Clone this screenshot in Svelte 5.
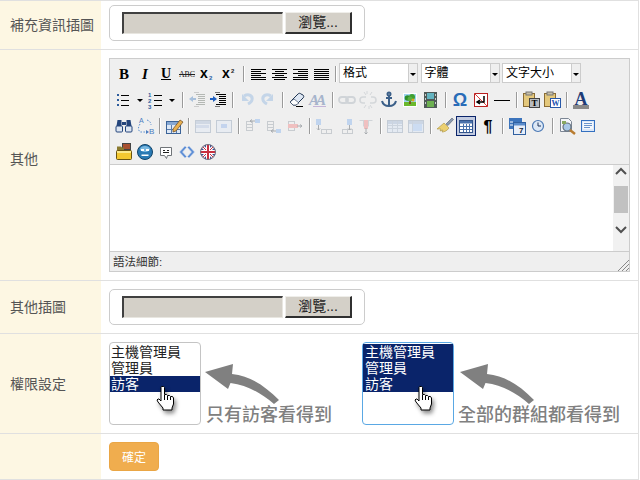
<script>
	const sans = 'font-family="Liberation Sans"';
	const serif = 'font-family="Liberation Serif"';

	const hline = (x1, x2, y, c = '#000') => `<path d="M${x1} ${y}.5H${x2}" stroke="${c}" shape-rendering="crispEdges"/>`;
	const lines = (rows, c) => rows.map(([x1, x2, y]) => hline(x1, x2, y, c)).join('');

	const grid = (x, y, w, h, stroke, fill, head) => {
		let s = `<rect x="${x}.5" y="${y}.5" width="${w}" height="${h}" fill="${fill}" stroke="${stroke}" shape-rendering="crispEdges"/>`;
		if (head) s += `<rect x="${x + 1}" y="${y + 1}" width="${w - 1}" height="3" fill="${head}"/>`;
		return s;
	};
	const rowsOf = (c) => `<g fill="none" stroke="${c}" shape-rendering="crispEdges"><path d="M3.5 5.5h6v9h-6zM3.5 8.5h6M3.5 11.5h6"/></g>`;
	const colsOf = (c) => `<g fill="none" stroke="${c}" shape-rendering="crispEdges"><path d="M7.5 13.5h10v4h-10zM12.5 13.5v4"/></g>`;

	const icons = {
		bold: `<text x="10" y="15" ${serif} font-weight="bold" font-size="15" text-anchor="middle">B</text>`,
		italic: `<text x="10" y="15" ${serif} font-weight="bold" font-style="italic" font-size="15" text-anchor="middle">I</text>`,
		underline: `<text x="10" y="14" ${serif} font-weight="bold" font-size="14" text-anchor="middle">U</text>${hline(5, 15, 15)}`,
		strike: `<text x="10" y="13" ${serif} font-size="9" fill="#111" text-anchor="middle" textLength="16" lengthAdjust="spacingAndGlyphs">ABC</text>${hline(2, 18, 10, '#222')}`,
		sub: `<text x="2" y="14" ${sans} font-weight="bold" font-size="14">x</text><text x="11" y="16" ${sans} font-weight="bold" font-size="6" fill="#2a5fa8">2</text>`,
		sup: `<text x="3" y="14" ${sans} font-weight="bold" font-size="14">x</text><text x="12" y="9" ${sans} font-weight="bold" font-size="6" fill="#222">2</text>`,
		left: lines([[3, 18, 5], [3, 13, 7], [3, 18, 9], [3, 13, 11], [3, 18, 13], [3, 18, 15]]),
		center: lines([[3, 18, 5], [6, 15, 7], [3, 18, 9], [6, 15, 11], [3, 18, 13], [5, 16, 15]]),
		right: lines([[3, 18, 5], [8, 18, 7], [3, 18, 9], [8, 18, 11], [3, 18, 13], [3, 18, 15]]),
		full: lines([[3, 18, 5], [3, 18, 7], [3, 18, 9], [3, 18, 11], [3, 18, 13], [3, 18, 15]]),
		bullist: `<g fill="#2d5c9e"><rect x="3" y="4" width="2" height="2"/><rect x="3" y="9" width="2" height="2"/><rect x="3" y="14" width="2" height="2"/></g>` + lines([[7, 15, 5], [7, 15, 10], [7, 15, 15]]),
		numlist: `<g ${sans} font-size="6" font-weight="bold" fill="#2d5c9e"><text x="2" y="7">1</text><text x="2" y="13">2</text><text x="2" y="19">3</text></g>` + lines([[8, 16, 5], [8, 16, 10], [8, 16, 15]]),
		outdent: lines([[9, 18, 4], [11, 18, 6], [11, 18, 8], [11, 18, 10], [11, 18, 12], [9, 18, 14]], '#b4b8b4') + lines([[7, 12, 2], [7, 12, 16]], '#ccc') + `<path d="M2 9l4-3v6z" fill="#a8c0dc"/><path d="M6 8h3v2h-3z" fill="#a8c0dc"/>`,
		indent: lines([[8, 18, 4], [11, 18, 6], [11, 18, 8], [11, 18, 10], [11, 18, 12], [8, 18, 14]]) + lines([[7, 12, 2], [7, 12, 16]], '#777') + `<path d="M9 9l-4-3v6z" fill="#2060c0"/><path d="M2 8h4v2h-4z" fill="#2060c0"/>`,
		undo: `<path d="M5 4v7h7z" fill="#c4d5e8"/><path d="M7 6c5-3 9 0 8 4-.5 2-2 3-4 4" fill="none" stroke="#c4d5e8" stroke-width="3"/>`,
		redo: `<path d="M15 4v7H8z" fill="#c4d5e8"/><path d="M13 6c-5-3-9 0-8 4 .5 2 2 3 4 4" fill="none" stroke="#c4d5e8" stroke-width="3"/>`,
		eraser: `<path d="M3 12l8-8c1-1 2-1 3 0l2 1c1 1 1 2 0 3l-7 7H6z" fill="#dfe8f4" stroke="#1e3350"/><path d="M3 12l4-3 5 4-3 2H6z" fill="#fff" stroke="#1e3350" stroke-width=".6"/>${hline(9, 16, 16)}`,
		aa: `<text x="1" y="15" ${serif} font-style="italic" font-weight="bold" font-size="15" letter-spacing="-3" fill="#a6b4cc">AA</text>${hline(5, 18, 16, '#c4b4d8')}`,
		link: `<g fill="none" stroke="#d0d4d8" stroke-width="1.8"><rect x="2" y="7" width="9" height="6" rx="3"/><rect x="9" y="7" width="9" height="6" rx="3"/></g>`,
		unlink: `<g fill="none" stroke="#d4d7da" stroke-width="1.6"><path d="M8 7H5a3 3 0 000 6h2M12 13h3a3 3 0 000-6h-2"/><path d="M6 2l2 3M14 2l-2 3M6 18l2-3M14 18l-2-3M9 1v3M11 16v3" stroke-width="1"/></g>`,
		anchor: `<g fill="none" stroke="#3b5f88" stroke-width="2"><circle cx="10" cy="4" r="1.5"/><path d="M10 6v10M7 8h6M3 11c1 4 4 5 7 5s6-1 7-5"/></g>`,
		image: `<rect x="3" y="3" width="14" height="14" fill="#fff"/><rect x="4" y="4" width="12" height="9" fill="#9fd4f0"/><rect x="4" y="12" width="12" height="4" fill="#6ab82c"/><rect x="9" y="9" width="2" height="5" fill="#7a5020"/><circle cx="7.5" cy="8" r="2.8" fill="#2f8f2a"/><circle cx="12" cy="7" r="3" fill="#3fa030"/><circle cx="10" cy="9" r="2.5" fill="#5ab040"/><circle cx="13" cy="10" r="1.5" fill="#e0a020"/>`,
		media: `<rect x="3" y="2" width="13" height="16" fill="#4f5a58"/><rect x="6" y="3" width="7" height="6" fill="#64b4c0"/><rect x="6" y="11" width="7" height="6" fill="#6cb050"/><g fill="#c8d0cc"><rect x="4" y="4" width="1" height="2"/><rect x="4" y="8" width="1" height="2"/><rect x="4" y="12" width="1" height="2"/><rect x="14" y="4" width="1" height="2"/><rect x="14" y="8" width="1" height="2"/><rect x="14" y="12" width="1" height="2"/></g>`,
		omega: `<text x="10" y="16" ${sans} font-weight="bold" font-size="18" fill="#2a6cb8" text-anchor="middle">Ω</text>`,
		nbsp: `<rect x="3.5" y="3.5" width="13" height="13" fill="#fff" stroke="#b82020"/><path d="M3 3l14 14" stroke="#d84040"/><path d="M13 6v6H7M9 10l-3 2 3 2" fill="none" stroke="#000" stroke-width="1.5"/>`,
		hr: hline(2, 18, 10),
		pastetext: `<rect x="2.5" y="3.5" width="11" height="13" fill="#e4c87c" stroke="#8a6c34"/><rect x="5" y="2" width="6" height="3" fill="#c8c0a8" stroke="#777"/><rect x="8.5" y="8.5" width="10" height="9" fill="#b8bcc0" stroke="#444"/><text x="13.5" y="16" ${serif} font-weight="bold" font-size="9" text-anchor="middle">T</text>`,
		pasteword: `<rect x="2.5" y="3.5" width="11" height="13" fill="#e4c87c" stroke="#8a6c34"/><rect x="5" y="2" width="6" height="3" fill="#c8c0a8" stroke="#777"/><rect x="8.5" y="8.5" width="10" height="9" fill="#fff" stroke="#2858a8"/><text x="13.5" y="16" ${serif} font-weight="bold" font-size="8" fill="#2050b0" text-anchor="middle">W</text>`,
		color: `<text x="10" y="15" ${serif} font-weight="bold" font-size="18" fill="#1e3c78" text-anchor="middle">A</text><rect x="2" y="15" width="16" height="4" fill="#888"/>`,
		find: `<g fill="#24457c"><path d="M3.5 4h4v6h-5zM12.5 4h4l1 6h-5z"/><rect x="8" y="6" width="4" height="3"/></g><rect x="2" y="10" width="6.5" height="6" rx="1" fill="#dde6f2" stroke="#24457c"/><rect x="11.5" y="10" width="6.5" height="6" rx="1" fill="#dde6f2" stroke="#24457c"/>`,
		replace: `<g fill="none" stroke="#5a8ed0" stroke-dasharray="1.5 1.5"><path d="M5 8c-2 3-2 6 0 8h6"/><path d="M12 4c3 1 4 3 4 5"/></g><text x="4" y="7" ${sans} font-size="7" fill="#4a7cc0">A</text><text x="14" y="18" ${sans} font-size="8" fill="#4a7cc0">B</text><path d="M11 14l3 2-3 2z" fill="#4a7cc0"/>`,
		tableprops: `<rect x="2.5" y="5.5" width="14" height="12" fill="#dde8f6" stroke="#3c6498"/><rect x="3" y="6" width="13" height="3" fill="#86a8d4"/><path d="M7.5 9v8M12.5 9v8M3 13.5h13" stroke="#5a7cac"/><path d="M9 13l7-9 3 2-7 9-3 1z" fill="#e8b050" stroke="#6a4820" stroke-width=".7"/>`,
		cellp: grid(2, 4, 15, 12, '#c4ccd6', '#e8ecf2', '#d0d8e4') + `<rect x="3" y="9" width="13" height="3" fill="#d4dcea"/>`,
		rowp: grid(2, 4, 15, 12, '#c4ccd6', '#e8ecf2') + `<rect x="7" y="8" width="6" height="4" fill="#c4d4ee"/>`,
		rowb: rowsOf('#c8ccd0') + `<rect x="12" y="3" width="5" height="4" fill="#c0d4ee"/><path d="M7 5h5M9 3.5L7 5l2 1.5" fill="none" stroke="#a8acb0"/>`,
		rowa: rowsOf('#c8ccd0') + `<rect x="12" y="13" width="5" height="4" fill="#c0d4ee"/><path d="M7 15h5M9 13.5L7 15l2 1.5" fill="none" stroke="#a8acb0"/>`,
		rowd: rowsOf('#c8ccd0') + `<rect x="3" y="8" width="10" height="4" fill="#f0c0c0"/><path d="M12 10h5M15 8.5l2 1.5-2 1.5" fill="none" stroke="#a8acb0"/>`,
		cola: colsOf('#c8ccd0') + `<rect x="2" y="3" width="5" height="6" fill="#c0d4ee"/><path d="M4.5 9v5M3 12.5L4.5 14 6 12.5" fill="none" stroke="#a8acb0"/>`,
		colb: colsOf('#c8ccd0') + `<rect x="12" y="3" width="5" height="6" fill="#c0d4ee"/><path d="M14.5 9v5M13 12.5l1.5 1.5 1.5-1.5" fill="none" stroke="#a8acb0"/>`,
		cold: `<path d="M3.5 4.5h13M7.5 4.5v6M12.5 4.5v6" stroke="#d0d4d8" fill="none"/><rect x="8" y="4" width="4" height="9" fill="#f0c0c0"/><path d="M10 12v6M8.5 16.5L10 18l1.5-1.5" fill="none" stroke="#a8acb0"/>`,
		split: grid(2, 4, 15, 12, '#c4ccd6', '#e4eaf2', '#ccd6e4') + `<path d="M7.5 5v11M12.5 5v11M3 9.5h14M3 12.5h14" stroke="#ccd4de"/>`,
		merge: grid(2, 4, 15, 12, '#c4ccd6', '#e4eaf2', '#ccd6e4') + `<rect x="7" y="8" width="9" height="7" fill="#ccdcf2"/><path d="M6.5 5v11" stroke="#ccd4de"/>`,
		brush: `<path d="M2 13l7-6 5 5c-2 3-5 4-7 4l1-2-3 1 1-2z" fill="#ecd070" stroke="#a89040" stroke-width=".6"/><path d="M11 8l6-6 1.5 1.5-5.500 6z" fill="#8a9ab0" stroke="#55606e" stroke-width=".6"/>`,
		visual: `<rect x="3.5" y="4.5" width="13" height="12" fill="#fff" stroke="#34568c"/><rect x="4" y="5" width="12" height="2.5" fill="#4a72ac"/><path d="M7.5 8v8M10.5 8v8M13.5 8v8M4 10.5h12M4 13.5h12" stroke="#4a72ac" shape-rendering="crispEdges"/>`,
		pilcrow: `<text x="10" y="16" ${sans} font-weight="bold" font-size="16" text-anchor="middle">¶</text>`,
		cal: `<rect x="2" y="2" width="13" height="11" fill="#3c74bc"/><rect x="6.5" y="6.5" width="12" height="12" fill="#e8eef8" stroke="#3060a0"/><rect x="7" y="7" width="11" height="2.5" fill="#5a8ccc"/><text x="12" y="17" ${sans} font-weight="bold" font-size="8" fill="#123">7</text><path d="M3 6h3M3 9h3" stroke="#fff"/>`,
		clock: `<circle cx="10" cy="10" r="5.5" fill="#dce8f6" stroke="#4a78b4" stroke-width="1.2"/><path d="M10 6.5V10h3" fill="none" stroke="#1e3358"/>`,
		preview: `<path d="M3.5 2.5h8l3 3v10h-11z" fill="#f4f6fa" stroke="#7c8694"/><circle cx="10" cy="11" r="4" fill="#a8c8e8" stroke="#64707c" stroke-width="1.2"/><path d="M13 14l5 4" stroke="#b87c30" stroke-width="2.5"/><rect x="5" y="5" width="4" height="3" fill="#88a860"/>`,
		fullscreen: `<rect x="3.5" y="4.5" width="13" height="11" fill="#dce8f8" stroke="#3470c0"/><rect x="5" y="6" width="10" height="7" fill="#f4f8fd"/><path d="M6 7.5h8M6 9.500h8M6 11.5h6" stroke="#6a94cc"/>`,
		folder: `<rect x="8" y="1" width="9" height="9" fill="#444"/><rect x="9" y="2" width="7" height="5" fill="#a85030"/><path d="M3 4.5h4l1 1h2V10H3z" fill="#8a7a30"/><rect x="2.5" y="8.5" width="15" height="9" rx="1" fill="#f4c830" stroke="#6a5410"/><rect x="3" y="9" width="14" height="2" fill="#fbe88a"/>`,
		smile: `<circle cx="10" cy="10" r="7.5" fill="#2a7ab4" stroke="#134468"/><ellipse cx="10" cy="7" rx="5" ry="3" fill="#7ab8e0"/><rect x="6" y="7" width="3" height="2" fill="#fff"/><rect x="11" y="7" width="3" height="2" fill="#fff"/><path d="M6.5 12.5h7v1.5h-7z" fill="#fff"/>`,
		comment: `<path d="M4.5 5.5h11v8h-4l-1 3-2-3h-4z" fill="#fff" stroke="#707478"/><path d="M7 8.5h2M11 8.5h2M7 10.5h6" stroke="#222"/>`,
		code: `<path d="M8 4L2.500 10 8 16l1.500-1.500L5.500 10l4-4.500zM12 4l5.500 6-5.500 6-1.500-1.500 4-4.500-4-4.500z" fill="#5a8cd4" stroke="#c4d4ec" stroke-width=".6"/>`,
		flag: `<defs><clipPath id="uk"><circle cx="10" cy="10" r="7.5"/></clipPath></defs><g clip-path="url(#uk)"><rect x="2" y="2" width="16" height="16" fill="#3c4c8e"/><path d="M2 2l16 16M18 2L2 18" stroke="#fff" stroke-width="3"/><path d="M2 2l16 16M18 2L2 18" stroke="#c83040" stroke-width="1"/><path d="M10 2v16M2 10h16" stroke="#fff" stroke-width="4"/><path d="M10 2v16M2 10h16" stroke="#c83040" stroke-width="2"/></g><circle cx="10" cy="10" r="7.5" fill="none" stroke="#707080"/>`
	};

	const toolbar = [
		['bold', 'italic', 'underline', 'strike', 'sub', 'sup', '|', 'left', 'center', 'right', 'full', '|', '格式', '字體', '文字大小'],
		['bullist', 'v', 'numlist', 'v', '|', 'outdent', 'indent', '|', 'undo', 'redo', '|', 'eraser', 'aa', '|', 'link', 'unlink', 'anchor', 'image', 'media', '|', 'omega', 'nbsp', 'hr', '|', 'pastetext', 'pasteword', '|', 'color'],
		['find', 'replace', '|', 'tableprops', '|', 'cellp', 'rowp', '|', 'rowb', 'rowa', 'rowd', '|', 'cola', 'colb', 'cold', '|', 'split', 'merge', '|', 'brush', 'visual', 'pilcrow', '|', 'cal', 'clock', '|', 'preview', 'fullscreen'],
		['folder', 'smile', 'comment', 'code', 'flag']
	];

	const roles = ['主機管理員', '管理員', '訪客'];
	const perms = [
		{ selected: ['訪客'], note: '只有訪客看得到', focus: false },
		{ selected: roles, note: '全部的群組都看得到', focus: true }
	];
</script>

{#snippet filebox()}
	<div class="filebox">
		<div class="file-input"></div>
		<div class="file-btn">瀏覽...</div>
	</div>
{/snippet}

<div class="form">
	<div class="row first">
		<div class="label">補充資訊插圖</div>
		<div class="cell">{@render filebox()}</div>
	</div>

	<div class="row">
		<div class="label raised">其他</div>
		<div class="cell">
			<div class="editor">
				<div class="toolbar">
					{#each toolbar as items}
						<div class="tb-row">
							{#each items as item}
								{#if item === '|'}
									<span class="sep"></span>
								{:else if item === 'v'}
									<span class="drop"><i></i></span>
								{:else if icons[item]}
									<span class="tb-btn" class:active={item === 'visual'}>
										<svg width="20" height="20" viewBox="0 0 20 20">{@html icons[item]}</svg>
									</span>
								{:else}
									<span class="tb-select">
										<span class="tb-value">{item}</span>
										<span class="tb-arrow"><i></i></span>
									</span>
								{/if}
							{/each}
						</div>
					{/each}
				</div>
				<div class="area">
					<div class="scrollbar">
						<svg width="16" height="14" viewBox="0 0 16 14"><path d="M3 9l5-5 5 5" fill="none" stroke="#505050" stroke-width="2"/></svg>
						<div class="thumb"></div>
						<svg width="16" height="14" viewBox="0 0 16 14"><path d="M3 5l5 5 5-5" fill="none" stroke="#505050" stroke-width="2"/></svg>
					</div>
				</div>
				<div class="status">
					<span>語法細節:</span>
					<svg class="grip" width="11" height="11" viewBox="0 0 11 11"><path d="M0 11L11 0M4 11l7-7M8 11l3-3" stroke="#888"/></svg>
				</div>
			</div>
		</div>
	</div>

	<div class="row">
		<div class="label">其他插圖</div>
		<div class="cell">{@render filebox()}</div>
	</div>

	<div class="row">
		<div class="label">權限設定</div>
		<div class="cell perms">
			{#each perms as perm, i}
				<div class="perm" class:second={i === 1}>
					<div class="listbox" class:focus={perm.focus}>
						{#each roles as role}
							<div class="option" class:on={perm.selected.includes(role)}>{role}</div>
						{/each}
						<svg class="hand" width="20" height="25" viewBox="0 0 20 25">
							<path d="M5.5.5h2l1 1v7h2l1 1h2l1 1h2l1 1.5v6l-1.5 4v2h-9v-2l-5-6-1-2 1-1h1l2 2V1.5z" fill="#fff" stroke="#000" stroke-linejoin="round"/>
							<path d="M8.5 9v5M11.5 10v4M14.5 11v3" stroke="#000" fill="none"/>
						</svg>
					</div>
					<div class="note">
						<svg width="76" height="41" viewBox="0 0 76 41"><path d="M0 8L28 0l-1 10c19 2 33 12 47 26l-5 4C56 29 42 21 25.5 19L23 25z" fill="#808080"/></svg>
						<div class="note-text">{perm.note}</div>
					</div>
				</div>
			{/each}
		</div>
	</div>

	<div class="row">
		<div class="label"></div>
		<div class="cell"><button class="submit">確定</button></div>
	</div>
</div>

<style>
	:global(body) {
		background: #fff;
	}
	.form {
		width: 638px;
		border-top: 1px solid #e0e0e0;
		border-right: 1px solid #e0e0e0;
		font-family: "Liberation Sans", "Noto Sans CJK TC", sans-serif;
	}
	.row {
		display: flex;
		border-bottom: 1px solid #e0e0e0;
	}
	.label {
		flex: 0 0 91px;
		display: flex;
		align-items: center;
		padding-left: 10px;
		background: #fdf7e3;
		color: #555;
		font-size: 14px;
		line-height: 20px;
	}
	.raised {
		padding-bottom: 12px;
	}
	.cell {
		flex: 1;
		min-width: 0;
		padding: 8px;
	}
	.first .cell {
		padding-top: 4px;
	}

	.filebox {
		display: flex;
		gap: 2px;
		width: 230px;
		padding: 6px 12px;
		border: 1px solid #ccc;
		border-radius: 5px;
	}
	.file-input {
		flex: 0 0 161px;
		box-sizing: border-box;
		height: 22px;
		background: #d4d0c8;
		border-top: 2px solid #404040;
		border-left: 2px solid #404040;
		border-right: 1px solid #e8e6e0;
		border-bottom: 1px solid #e8e6e0;
	}
	.file-btn {
		flex: 0 0 67px;
		box-sizing: border-box;
		height: 22px;
		background: #d4d0c8;
		border-top: 1px solid #efeeea;
		border-left: 1px solid #efeeea;
		border-right: 2px solid #303030;
		border-bottom: 2px solid #303030;
		color: #222;
		font-size: 14px;
		line-height: 19px;
		text-align: center;
	}

	.editor {
		border: 1px solid #ccc;
		background: #efefef;
	}
	.toolbar {
		height: 103px;
		padding: 2px 0 0 3px;
	}
	.tb-row {
		display: flex;
		align-items: center;
		height: 26px;
	}
	.tb-btn {
		flex: 0 0 21px;
		height: 20px;
		display: flex;
		justify-content: center;
	}
	.tb-btn svg {
		display: block;
	}
	.tb-btn.active {
		flex-basis: 19px;
		margin: 0 1px;
		box-sizing: border-box;
		border: 1px solid #0a246a;
		background: #c2cbe0;
	}
	.tb-btn.active svg {
		margin: -1px;
		flex: none;
	}
	.sep {
		flex: 0 0 8px;
		height: 16px;
	}
	.sep::before {
		content: "";
		display: block;
		width: 1px;
		height: 16px;
		margin-left: 4px;
		background: #9a9a9a;
		box-shadow: 1px 0 0 #fff;
	}
	.drop {
		flex: 0 0 11.5px;
		display: flex;
		justify-content: center;
	}
	.drop i,
	.tb-arrow i {
		display: block;
		width: 0;
		height: 0;
		border-left: 3px solid transparent;
		border-right: 3px solid transparent;
		border-top: 3px solid #000;
	}
	.tb-select {
		flex: 0 0 79px;
		display: flex;
		height: 20px;
		margin-right: 2.5px;
		margin-top: -2px;
		font-size: 12px;
		color: #000;
	}
	.tb-value {
		box-sizing: border-box;
		flex: 0 0 70px;
		padding: 0 3px;
		line-height: 18px;
		background: #fff;
		border: 1px solid #ccc;
	}
	.tb-arrow {
		flex: 0 0 9px;
		box-sizing: border-box;
		display: flex;
		align-items: center;
		justify-content: center;
		border: 1px solid #ccc;
		border-left: 0;
		padding-top: 2px;
	}

	.area {
		display: flex;
		justify-content: flex-end;
		height: 86px;
		background: #fff;
		border-top: 1px solid #ccc;
		border-bottom: 1px solid #ccc;
	}
	.scrollbar {
		width: 16px;
		background: #f1f1f1;
	}
	.scrollbar svg {
		display: block;
	}
	.thumb {
		width: 14px;
		height: 27px;
		margin: 7px 1px 9px;
		background: #c1c1c1;
	}
	.status {
		position: relative;
		height: 19px;
		padding-left: 3px;
		font-size: 11.5px;
		line-height: 21px;
		color: #333;
	}
	.grip {
		position: absolute;
		right: 0;
		bottom: 0;
	}

	.perms {
		display: flex;
	}
	.perm {
		display: flex;
		flex: 0 0 253px;
	}
	.listbox {
		position: relative;
		box-sizing: border-box;
		flex: 0 0 92px;
		height: 83px;
		padding: 1px 0;
		border: 1px solid #c4c4c4;
		border-radius: 4px;
		font-size: 14px;
		line-height: 16px;
		color: #222;
	}
	.listbox.focus {
		border-color: #5aa8e4;
	}
	.option {
		height: 16px;
		padding-left: 1px;
	}
	.second .option {
		padding-left: 2px;
	}
	.option.on {
		background: #0a246a;
		color: #fff;
	}
	.hand {
		position: absolute;
		left: 46px;
		top: 43px;
		filter: drop-shadow(2px 3px 2px rgba(0, 0, 0, 0.45));
	}
	.second .hand {
		left: 51px;
	}
	.note {
		margin-left: 4px;
		padding-top: 22px;
	}
	.second .note {
		margin-left: 6px;
	}
	.note svg {
		display: block;
	}
	.note-text {
		margin: 1px 0 0 1px;
		color: #808080;
		font-size: 18px;
		font-weight: 500;
		line-height: 18px;
		white-space: nowrap;
	}
	.second .note-text {
		margin-left: -2px;
	}

	.submit {
		display: block;
		width: 50px;
		height: 29px;
		padding: 0;
		background: #f0ad4e;
		border: 1px solid #eaa645;
		border-radius: 4px;
		color: #fff;
		font-family: inherit;
		font-size: 12px;
	}
</style>
